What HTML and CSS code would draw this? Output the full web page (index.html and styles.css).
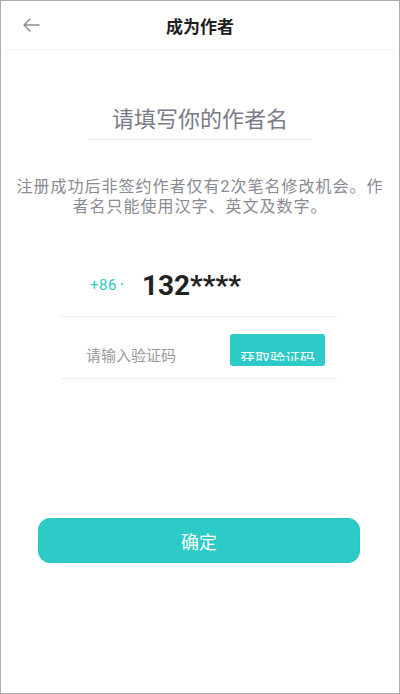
FILE: index.html
```html
<!DOCTYPE html>
<html lang="zh-CN">
<head>
  <meta charset="UTF-8" />
  <meta name="viewport" content="width=device-width, initial-scale=1" />
  <title>成为作者</title>
  <link rel="stylesheet" href="styles.css">
</head>
<body>
  <main class="page">
    <header class="top-bar">
      <button type="button" class="back-btn" aria-label="返回">
        <svg width="18" height="14" viewBox="0 0 18 14" aria-hidden="true">
          <path d="M17 7H2M8 1L2 7l6 6" fill="none" stroke="#8a8a8a" stroke-width="1.4" stroke-linecap="round" stroke-linejoin="round"/>
        </svg>
      </button>
      <h1>成为作者</h1>
    </header>

    <!-- 作者名 -->
    <h2 class="name-title">请填写你的作者名</h2>

    <p class="tips">注册成功后非签约作者仅有2次笔名修改机会。作者名只能使用汉字、英文及数字。</p>

    <form class="author-form" autocomplete="off">
      <div class="phone-row">
        <span class="area-code">+86</span>
        <span class="dot"></span>
        <span class="phone">132****</span>
      </div>

      <div class="code-row">
        <input type="text" class="code-input" placeholder="请输入验证码" />
        <button type="button" class="code-btn"><span>获取验证码</span></button>
      </div>

      <button type="submit" class="submit-btn">确定</button>
    </form>
  </main>
</body>
</html>
```

FILE: styles.css
```css
* { box-sizing: border-box; }
body {
  margin: 0;
  background: #fff;
  font-family: Roboto, "Noto Sans CJK SC", sans-serif;
}
.page {
  width: 400px;
  height: 694px;
  border: 1px solid #adadad;
  background: #fff;
}
.top-bar {
  height: 49px;
  margin: 0 5px;
  border-bottom: 1px solid #f2f2f2;
  display: flex;
  align-items: center;
  justify-content: center;
  position: relative;
}
.top-bar h1 {
  margin: 0;
  font-size: 17px;
  font-weight: bold;
  color: #1f1f1f;
}
.back-btn {
  position: absolute;
  left: 16px;
  top: 17px;
  background: none;
  border: none;
  padding: 0;
  line-height: 0;
}
.name-title {
  width: 224px;
  margin: 55px auto 0;
  padding-bottom: 4px;
  border-bottom: 1px solid #ebebeb;
  text-align: center;
  font-size: 22px;
  line-height: 30px;
  font-weight: normal;
  color: #7a7a88;
}
.tips {
  margin: 37px 0 0;
  padding: 0 14px;
  text-align: center;
  font-size: 16px;
  letter-spacing: 1px;
  line-height: 20px;
  color: #8a8a95;
}
.author-form {
  margin-top: 37px;
}
.phone-row {
  height: 63px;
  margin: 0 61px 0 59px;
  padding-left: 30px;
  border-bottom: 1px solid #f0f0f0;
  display: flex;
  align-items: center;
}
.area-code {
  font-size: 15px;
  color: #2cc9c6;
  letter-spacing: 0.5px;
}
.dot {
  width: 2px;
  height: 2px;
  margin: 0 0 2px 4px;
  background: #2cc9c6;
  border-radius: 50%;
}
.phone {
  margin-left: 19px;
  font-size: 28px;
  font-weight: bold;
  color: #222;
}
.code-row {
  height: 62px;
  margin: 0 61px 0 59px;
  border-bottom: 1px solid #f0f0f0;
  display: flex;
  align-items: flex-start;
}
.code-input {
  flex: 1;
  min-width: 0;
  margin-top: 29px;
  padding: 0 0 0 26px;
  border: none;
  outline: none;
  font-family: inherit;
  font-size: 15px;
  line-height: 20px;
  height: 20px;
  color: #333;
}
.code-input::placeholder {
  color: #9a9a9a;
}
.code-btn {
  width: 95px;
  height: 32px;
  margin: 17px 13px 0 0;
  padding: 12px 0 0;
  border: none;
  border-radius: 3px;
  background: #2ccbc7;
  color: #fff;
  font-family: inherit;
  font-size: 15px;
}
.code-btn span {
  display: block;
  height: 9px;
  line-height: 15px;
  overflow: hidden;
}
.submit-btn {
  display: block;
  width: 322px;
  height: 45px;
  margin: 139px 0 0 37px;
  border: 1px solid #27c4c1;
  border-radius: 12px;
  background: #2dcbc8;
  color: #fff;
  font-family: inherit;
  font-size: 18px;
}
```
